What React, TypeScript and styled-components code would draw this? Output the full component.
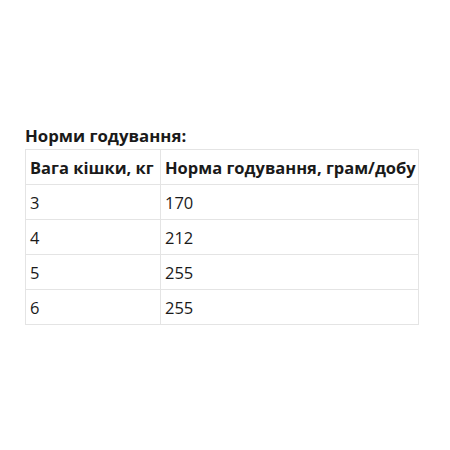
import styled, { createGlobalStyle } from "styled-components";

const GlobalStyle = createGlobalStyle`
  html, body {
    margin: 0;
    padding: 0;
    background: #ffffff;
  }
  body {
    font-family: "Open Sans", "Noto Sans", Arial, sans-serif;
    color: #1a1a1a;
  }
`;

const Page = styled.div`
  width: 450px;
  height: 450px;
  padding: 125px 0 0 25px;
  box-sizing: border-box;
`;

const Title = styled.h3`
  margin: 0 0 3px;
  font-size: 16.8px;
  line-height: 21px;
  font-weight: 700;
`;

const Table = styled.table`
  width: 394px;
  border-collapse: collapse;
  table-layout: fixed;
  font-size: 16.5px;
`;

const Cell = styled.td<{ $head?: boolean }>`
  height: 34px;
  padding: 0 2px 0 4px;
  border: 1px solid #e4e4e4;
  font-weight: ${(p) => (p.$head ? 700 : 400)};
  white-space: nowrap;
  vertical-align: middle;
`;

const rows = [
  ["3", "170"],
  ["4", "212"],
  ["5", "255"],
  ["6", "255"],
];

export default function App() {
  return (
    <>
      <GlobalStyle />
      <Page>
        <Title>Норми годування:</Title>
        <Table>
          <colgroup>
            <col style={{ width: 135 }} />
            <col />
          </colgroup>
          <tbody>
            <tr>
              <Cell $head>Вага кішки, кг</Cell>
              <Cell $head>Норма годування, грам/добу</Cell>
            </tr>
            {rows.map(([w, n]) => (
              <tr key={w}>
                <Cell>{w}</Cell>
                <Cell>{n}</Cell>
              </tr>
            ))}
          </tbody>
        </Table>
      </Page>
    </>
  );
}
